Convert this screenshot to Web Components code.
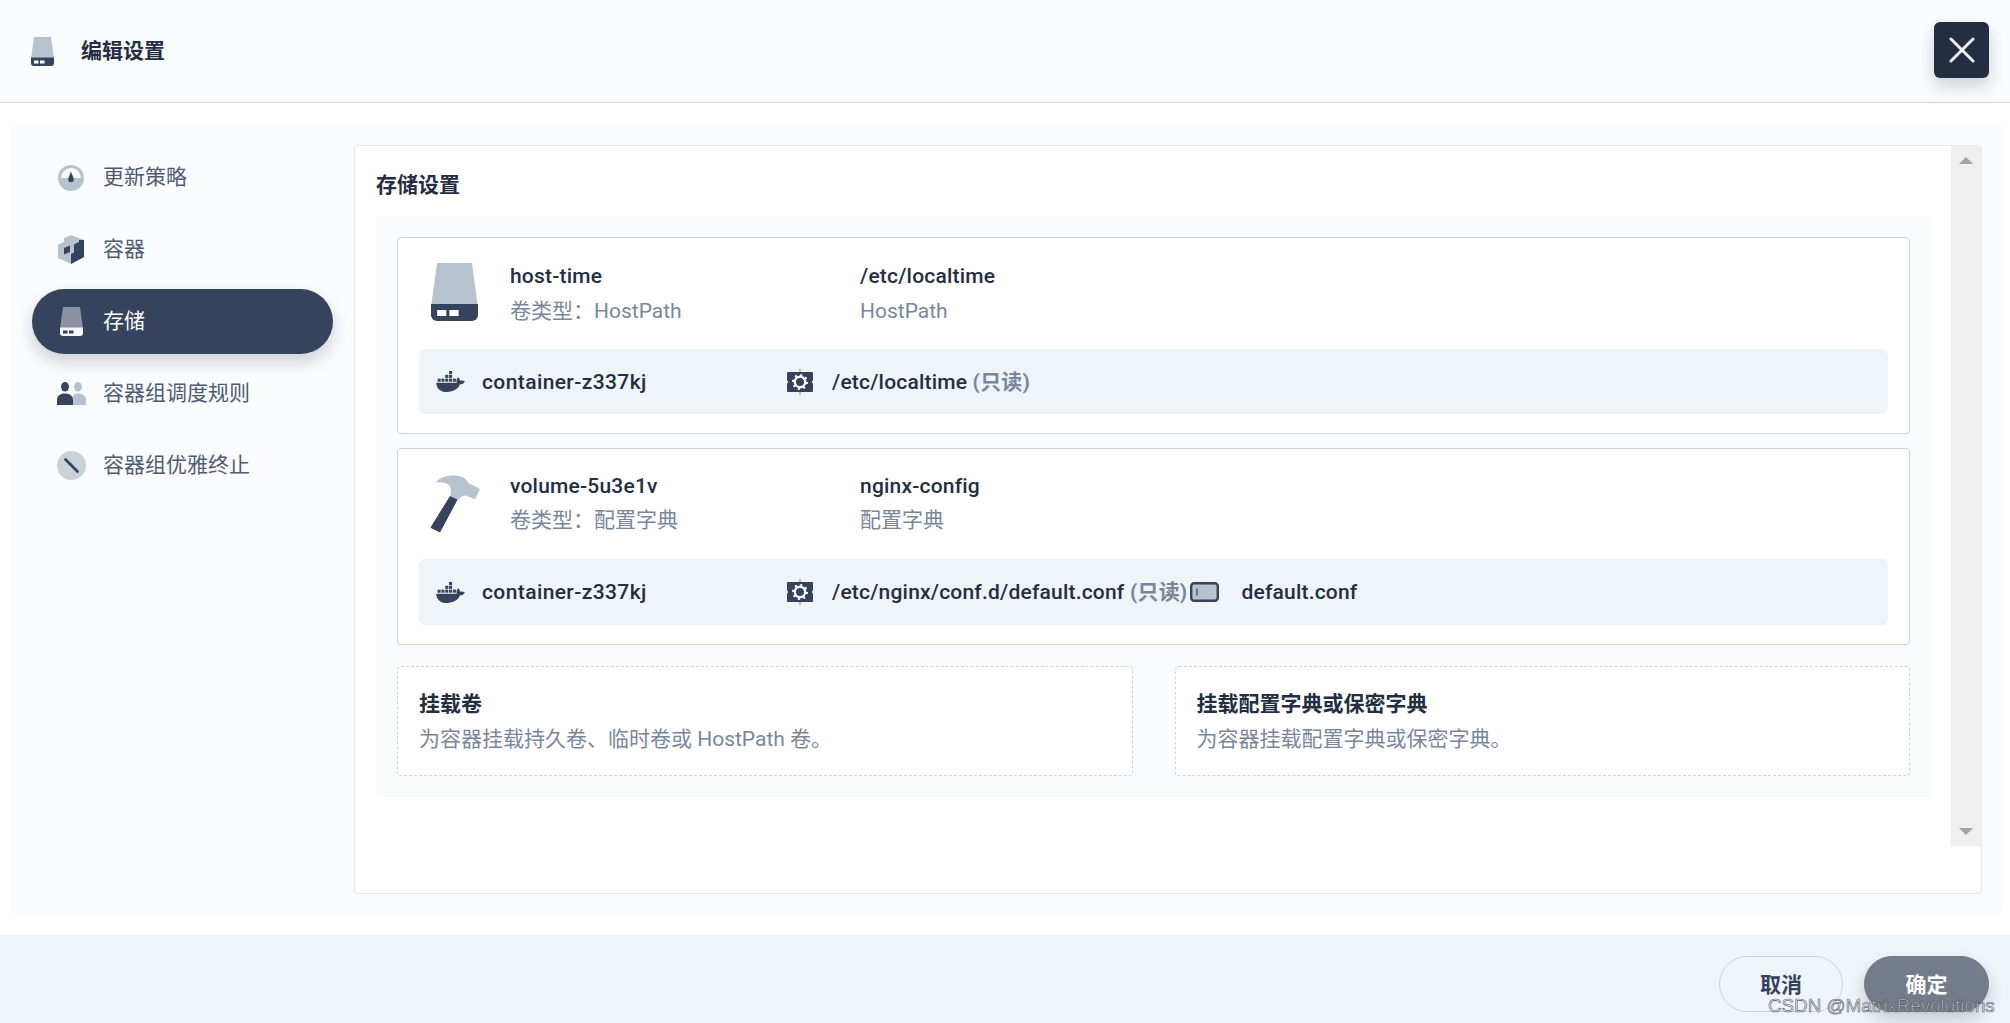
<!DOCTYPE html>
<html lang="zh"><head><meta charset="utf-8"><title>编辑设置</title>
<style>
html,body{margin:0;height:100%;overflow:hidden}
body{font-family:Roboto,"Noto Sans CJK SC",sans-serif;font-size:21px;color:#242e42;background:#fff}
</style></head><body>
<edit-dialog></edit-dialog>
<template id="t-dialog">
<style>
:host{display:flex;flex-direction:column;height:1023px;position:relative;background:#fff}
header{height:102px;flex:none;box-sizing:content-box;background:#f9fbfd;border-bottom:1px solid #ccd3db;display:flex;align-items:center;padding-left:31px}
header x-icon{width:23px;height:29px;margin-right:27px}
h1{font-size:21px;font-weight:700;margin:0 0 1px;line-height:28px;flex:1}
.close{width:55px;height:56px;border-radius:6px;background:#242e42;box-shadow:0 8px 16px rgba(36,46,66,.2);margin-right:21px;display:flex;align-items:center;justify-content:center;position:relative;top:-1px}
main{flex:1;min-height:0;padding:21px 7px 21px 11px;display:flex}
.panel{flex:1;background:#f9fbfd;border-radius:6px;display:flex;padding:21px 21px 20px 21px;min-width:0}
nav{width:301px;flex:none;margin-right:21px;display:flex;flex-direction:column;gap:7px}
.box{flex:1;min-width:0;background:#fff;border:1px solid #e3e9ef;border-radius:4px;display:flex;align-items:flex-start}
.content{flex:1;min-width:0;padding:0 21px}
h2{font-size:21px;font-weight:700;line-height:28px;margin:25px 0 17px}
.inner{background:#f9fbfd;border-radius:4px;padding:21px 21px 21px;width:1555px;box-sizing:border-box;display:flex;flex-direction:column;gap:14px}
.adds{display:flex;gap:42px;margin-top:7px}
footer{height:88px;flex:none;box-sizing:border-box;background:#eff4f9;display:flex;justify-content:flex-end;align-items:flex-start;padding:21px 21px 0 0;gap:21px}
.wm{position:absolute;left:1768px;top:995px;font:18.800px "Liberation Sans",Arial,sans-serif;color:rgba(225,228,232,.6);-webkit-text-stroke:.6px rgba(70,74,82,.9);white-space:nowrap}
</style>
<header><x-icon name="hdd"></x-icon><h1>编辑设置</h1>
<div class="close"><svg width="26" height="26" viewBox="0 0 26 26"><path d="M2 2L24 24M24 2L2 24" stroke="#eff1f4" stroke-width="3" stroke-linecap="round"/></svg></div></header>
<main><div class="panel">
<nav>
<nav-item icon="gauge">更新策略</nav-item>
<nav-item icon="box">容器</nav-item>
<nav-item icon="hdd" active>存储</nav-item>
<nav-item icon="people">容器组调度规则</nav-item>
<nav-item icon="ban">容器组优雅终止</nav-item>
</nav>
<section class="box"><div class="content">
<h2>存储设置</h2>
<div class="inner">
<volume-card icon="hdd" name="host-time" type="卷类型：HostPath" col="/etc/localtime" sub="HostPath" mount="/etc/localtime" first></volume-card>
<volume-card icon="hammer" name="volume-5u3e1v" type="卷类型：配置字典" col="nginx-config" sub="配置字典" mount="/etc/nginx/conf.d/default.conf" file="default.conf"></volume-card>
<div class="adds">
<add-card heading="挂载卷">为容器挂载持久卷、临时卷或 HostPath 卷。</add-card>
<add-card heading="挂载配置字典或保密字典">为容器挂载配置字典或保密字典。</add-card>
</div></div></div>
<fake-scrollbar></fake-scrollbar>
</section>
</div></main>
<footer><pill-button>取消</pill-button><pill-button primary>确定</pill-button></footer>
<div class="wm">CSDN @MatrixRevolutions</div>
</template>
<script>
const D='var(--p,#36435c)',L='var(--s,#b6c2cd)';
const ICONS={
hdd:`<svg viewBox="0 0 46 58" preserveAspectRatio="none"><path d="M6 0H40L46 44H0Z" fill="${L}"/><path d="M0 41H46V52a6 6 0 0 1-6 6H6a6 6 0 0 1-6-6Z" fill="${D}"/><rect x="6" y="47" width="9" height="6" fill="var(--h,#fff)"/><rect x="18" y="47" width="9" height="6" fill="var(--h,#fff)"/></svg>`,
hammer:`<svg viewBox="9 12 51 60"><path d="M15 20.500C22 13.500 34 12.500 42 15.500C46 17 47.500 21 49 22L59.300 27.500C59.800 28 59.800 28.500 59.500 29L55.500 37.500C55 38 54.500 38.200 54 38L46 34.500C44 34 41 35 37 39.500L29.500 35.500C31 30 31 25 27 22.500C24 20.800 19 20.500 15.500 21Z" fill="${L}"/><path d="M29.500 35.500L36.500 38.800L19 71.500L10 67Z" fill="${D}" stroke="${D}" stroke-linejoin="round"/></svg>`,
docker:`<svg viewBox="0 0 30 22"><g fill="${D}"><rect x="13.500" y="0" width="3.200" height="3.200"/><rect x="9.500" y="4" width="3.200" height="3.200"/><rect x="13.500" y="4" width="3.200" height="3.200"/><rect x="5.500" y="8" width="3.200" height="3.200"/><rect x="9.500" y="8" width="3.200" height="3.200"/><rect x="13.500" y="8" width="3.200" height="3.200"/><rect x="17.500" y="8" width="3.200" height="3.200"/><rect x="1.500" y="8" width="3.200" height="3.200"/><path d="M0 12.200H21.500C21 10 21.500 7.500 23 6.500C24.300 7.500 25 9 25 10.200C26.500 9.700 28.500 10 30 10.700C29 13 27 14 25 14C23 19 18 22 11 22C4 22 .5 18 0 12.200Z"/></g></svg>`,
mount:`<svg viewBox="0 0 26 26"><path d="M13 0V26" stroke="${L}" stroke-width="2.400"/><rect y="3" width="26" height="20" rx="1" fill="${D}"/><circle cx="13" cy="13" r="5.200" fill="none" stroke="#fff" stroke-width="2.400"/><circle cx="13" cy="13" r="7" fill="none" stroke="#fff" stroke-width="2" stroke-dasharray="2 3.500"/><rect x="-1" y="11.800" width="2" height="2.400" fill="#eff4f9"/><rect x="25" y="11.800" width="2" height="2.400" fill="#eff4f9"/></svg>`,
config:`<svg viewBox="0 0 29 20"><rect x="1.200" y="1.200" width="26.600" height="17.600" rx="3" fill="${L}" stroke="${D}" stroke-width="2.400"/><path d="M7 6.500V13.500" stroke="${D}" stroke-width="1.300"/></svg>`,
gauge:`<svg viewBox="0 0 26 26"><circle cx="13" cy="13" r="13" fill="${L}"/><path d="M3 13a10 10 0 0 1 20 0Z" fill="#f9fbfd"/><path d="M13 6.500C14 10 15.800 12.500 15.800 14.500a2.800 2.800 0 0 1-5.600 0C10.200 12.500 12 10 13 6.500Z" fill="${D}"/></svg>`,
box:`<svg viewBox="0 0 26 29"><path d="M0 9.500L6 7V3L13 0L26 5V22L13 29L0 23Z" fill="${L}"/><path d="M16 9.500L21 7V5L26 5V22L13 29V19L16 17.500Z" fill="${D}" opacity="1"/><path d="M6 13L12 10.500V17L6 19.500Z" fill="${D}"/></svg>`,
people:`<svg viewBox="0 0 29 23"><ellipse cx="21" cy="4.800" rx="4" ry="4.800" fill="${L}"/><path d="M15 23V18C15 13 18 11.500 21 11.500C25 11.500 29 13.500 29 18V23Z" fill="${L}"/><ellipse cx="8" cy="4.800" rx="4" ry="4.800" fill="${D}"/><path d="M0 23V18C0 13 4 11.500 8 11.500C12 11.500 16 13.500 16 18V23Z" fill="${D}"/></svg>`,
ban:`<svg viewBox="0 0 29 29"><circle cx="14.500" cy="14.500" r="14.500" fill="#c9d1d9"/><path d="M8.500 8.500L20.500 20.500" stroke="${D}" stroke-width="2.800" stroke-linecap="round"/></svg>`};
function def(tag,css,render){customElements.define(tag,class extends HTMLElement{
  constructor(){super();this.attachShadow({mode:'open'})}
  connectedCallback(){this.shadowRoot.innerHTML=`<style>${css}</style>`+render(this)}
})}
def('x-icon',':host{display:inline-block;flex:none}svg{display:block;width:100%;height:100%;overflow:visible}',e=>ICONS[e.getAttribute('name')]);
const NAVSZ={gauge:[26,26],box:[26,29],hdd:[23,29],people:[29,23],ban:[29,29]};
def('nav-item',`:host{display:flex;align-items:center;height:65px;border-radius:33px;padding-left:24px;color:#4f5b72;font-size:21px;line-height:28px;flex:none}
:host([active]){background:#36435c;color:#fff;box-shadow:0 8px 16px rgba(36,46,66,.2);--p:#f5f7f9;--s:#8b93a3;--h:#36435c}
.i{width:30px;display:flex;justify-content:center;margin-right:17px}
.t{margin-bottom:2px}`,
e=>{const n=e.getAttribute('icon'),s=NAVSZ[n];return `<span class="i"><x-icon name="${n}" style="width:${s[0]}px;height:${s[1]}px"></x-icon></span><span class="t"><slot></slot></span>`});
def('volume-card',`:host{display:block;background:#fff;border:1px solid #ccd3db;border-radius:4px;padding:23px 21px 19px 20px}
:host([first]){padding-top:24px}
.top{display:grid;grid-template-columns:92px 350px 1fr;height:63px;margin-bottom:24px}
.top x-icon.hdd{width:47px;height:58px;margin:1px 0 0 13px}
.top x-icon.hammer{width:50px;height:60px;margin:1px 0 0 12px}
.n{font-weight:500;line-height:28px;height:28px;letter-spacing:.2px}
.s{color:#79879c;line-height:28px;margin-top:6px}
:host([first]) .s{margin-top:7px}
.row{background:#eff4f9;border-radius:6px;height:66px;margin-left:1px;display:flex;align-items:center;padding-left:17px;font-weight:500;white-space:nowrap;letter-spacing:.2px;line-height:28px}
:host([first]) .row{height:65px}
.row x-icon.d{width:29px;height:21px;margin-right:17px}
.c{width:305px;flex:none;letter-spacing:.4px}
.row x-icon.m{width:26px;height:26px;margin-right:19px}
.ro{color:#79879c;font-weight:700}
.row x-icon.f{width:29px;height:20px;margin:0 22px 0 3px}`,
e=>{const a=k=>e.getAttribute(k),ic=a('icon');return `<div class="top"><x-icon class="${ic}" name="${ic}"></x-icon><div><div class="n">${a('name')}</div><div class="s">${a('type')}</div></div><div><div class="n">${a('col')}</div><div class="s">${a('sub')}</div></div></div>
<div class="row"><x-icon class="d" name="docker"></x-icon><span class="c">container-z337kj</span><x-icon class="m" name="mount"></x-icon><span>${a('mount')} <span class="ro">(只读)</span></span>${a('file')?`<x-icon class="f" name="config"></x-icon><span>${a('file')}</span>`:''}</div>`});
def('add-card',`:host{display:block;flex:1;height:110px;box-sizing:border-box;background:#fff;border:1px dashed #ccd3db;border-radius:4px;padding:23px 21px 0}
b{display:block;font-weight:700;line-height:28px}
span{display:block;color:#79879c;line-height:28px;margin-top:7px}`,
e=>`<b>${e.getAttribute('heading')}</b><span><slot></slot></span>`);
def('fake-scrollbar',`:host{display:flex;flex-direction:column;justify-content:space-between;align-items:center;flex:none;width:30px;height:700px;background:#efefef;padding:11px 0 11px;box-sizing:border-box;border-top-right-radius:4px}
i{display:block;width:0;height:0;border-left:7px solid transparent;border-right:7px solid transparent}
.u{border-bottom:7px solid #a3a3a3}.d{border-top:7px solid #a3a3a3}`,
()=>`<i class="u"></i><i class="d"></i>`);
def('pill-button',`:host{display:flex;align-items:center;justify-content:center;width:124px;height:56px;box-sizing:border-box;border:1px solid #ccd3db;border-radius:28px;font-weight:700;color:#36435c;font-size:21px;padding-bottom:3px}
:host([primary]){background:#747b8a;border-color:#747b8a;color:#fff;box-shadow:0 8px 16px rgba(36,46,66,.2);width:125px}`,
()=>`<slot></slot>`);
customElements.define('edit-dialog',class extends HTMLElement{
  constructor(){super();this.attachShadow({mode:'open'}).appendChild(document.getElementById('t-dialog').content.cloneNode(true))}
});
</script>
</body></html>
